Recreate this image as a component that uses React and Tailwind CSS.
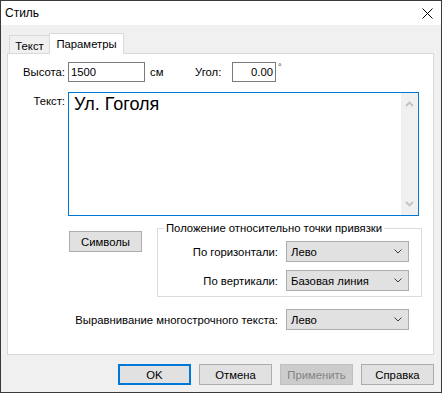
import React from 'react';

function Chevron() {
  return (
    <svg width="8" height="5" viewBox="0 0 8 5" className="shrink-0">
      <polyline points="0.5,0.5 4,4 7.5,0.5" fill="none" stroke="#3c3c3c" strokeWidth="1" />
    </svg>
  );
}

function Select({ value }) {
  return (
    <div className="w-[123px] h-[21px] bg-[#e1e1e1] border border-[#adadad] flex items-center justify-between pl-[4px] pr-[6px]">
      <span>{value}</span>
      <Chevron />
    </div>
  );
}

function Button({ children, primary, disabled, className = '' }) {
  const base = 'w-[73px] h-[21px] flex items-center justify-center';
  let look = 'bg-[#e1e1e1] border border-[#adadad] text-black';
  if (primary) look = 'bg-[#e1e1e1] border-2 border-[#0078d7] text-black';
  if (disabled) look = 'bg-[#cccccc] border border-[#bfbfbf] text-[#838383]';
  return <div className={`${base} ${look} ${className}`}>{children}</div>;
}

export default function App() {
  return (
    <div className="w-[442px] h-[393px] border border-[#3a3a3a] bg-[#f0f0f0] flex flex-col font-['Liberation_Sans',Arial,sans-serif] text-[11.3px] leading-[14px] text-black">
      {/* Title bar */}
      <div className="h-[24px] shrink-0 bg-white flex items-center justify-between pl-[4px] pr-[8px]">
        <span className="text-[12px]">Стиль</span>
        <svg width="11" height="11" viewBox="0 0 11 11">
          <path d="M0.5 0.5 L10.5 10.5 M10.5 0.5 L0.5 10.5" stroke="#000" strokeWidth="1" />
        </svg>
      </div>

      {/* Tabs */}
      <div className="h-[28px] shrink-0 flex items-end pl-[8px]">
        <div className="w-[41px] h-[18px] border border-b-0 border-[#d9d9d9] bg-[#f0f0f0] flex items-center justify-center pt-[2px]">
          Текст
        </div>
        <div className="relative z-10 -ml-[1px] -mb-[1px] w-[75px] h-[21px] border border-b-0 border-[#d9d9d9] bg-white flex items-center justify-center pb-[1px]">
          Параметры
        </div>
      </div>

      {/* Panel */}
      <div className="ml-[6px] w-[427px] h-[302px] shrink-0 bg-white border border-[#d9d9d9] pt-[8px]">
        {/* Row 1 */}
        <div className="flex items-center h-[20px]">
          <span className="w-[57px] text-right">Высота:</span>
          <div className="ml-[3px] w-[77px] h-[20px] border border-[#7a7a7a] flex items-center pl-[2px]">1500</div>
          <span className="ml-[5px] w-[45px]">см</span>
          <span className="w-[37px]">Угол:</span>
          <div className="w-[44px] h-[20px] border border-[#7a7a7a] flex items-center justify-end pr-[2px]">0.00</div>
          <span className="ml-[2px] self-start text-[9px] leading-[10px] text-[#333]">°</span>
        </div>

        {/* Row 2 */}
        <div className="flex items-start mt-[10px]">
          <span className="w-[57px] text-right pt-[2px]">Текст:</span>
          <div className="ml-[3px] w-[351px] h-[124px] border border-[#0078d7] flex">
            <div className="flex-1 pl-[5px] pt-[1px] text-[18px] leading-[20px]">Ул. Гоголя</div>
            <div className="w-[17px] bg-[#f0f0f0] flex flex-col items-center justify-between py-[8px]">
              <svg width="9" height="6" viewBox="0 0 9 6">
                <polyline points="1,5 4.5,1.5 8,5" fill="none" stroke="#c2c2c2" strokeWidth="1.8" />
              </svg>
              <svg width="9" height="6" viewBox="0 0 9 6">
                <polyline points="1,1 4.5,4.5 8,1" fill="none" stroke="#c2c2c2" strokeWidth="1.8" />
              </svg>
            </div>
          </div>
        </div>

        {/* Row 3 */}
        <div className="flex items-start mt-[5px]">
          <Button className="ml-[61px] mt-[10px]">Символы</Button>
          <fieldset className="ml-[15px] w-[265px] border border-[#dcdcdc] pb-[5px]">
            <legend className="ml-[6px] px-[2px] leading-[14px]">Положение относительно точки привязки</legend>
            <div className="flex items-center mt-[6px]">
              <span className="w-[120px] text-right">По горизонтали:</span>
              <div className="ml-[8px]"><Select value="Лево" /></div>
            </div>
            <div className="flex items-center mt-[8px]">
              <span className="w-[120px] text-right">По вертикали:</span>
              <div className="ml-[8px]"><Select value="Базовая линия" /></div>
            </div>
          </fieldset>
        </div>

        {/* Row 4 */}
        <div className="flex items-center mt-[12px]">
          <span className="w-[270px] text-right">Выравнивание многострочного текста:</span>
          <div className="ml-[8px]"><Select value="Лево" /></div>
        </div>
      </div>

      {/* Buttons */}
      <div className="mt-[9px] flex justify-end gap-[8px] pr-[7px]">
        <Button primary>OK</Button>
        <Button>Отмена</Button>
        <Button disabled>Применить</Button>
        <Button>Справка</Button>
      </div>
    </div>
  );
}
